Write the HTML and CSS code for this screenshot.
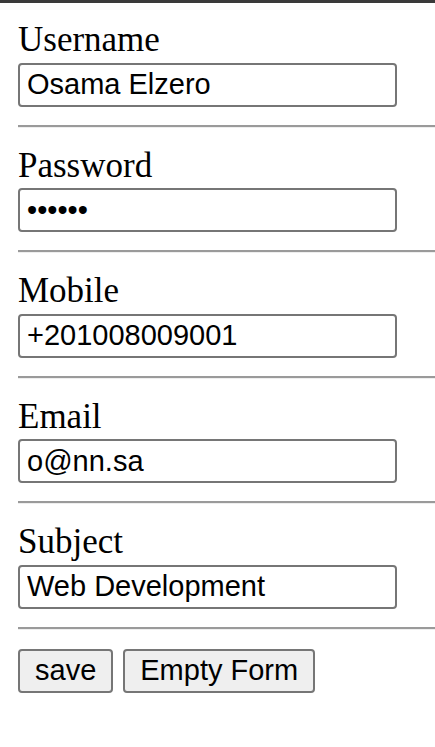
FILE: index.html
```html
<!DOCTYPE html>
<html>
<head>
<meta charset="utf-8">
<title>Form</title>
<link rel="stylesheet" href="styles.css">
</head>
<body>
<form class="form">
  <div class="field">
    <label class="label" for="u">Username</label>
    <input class="input" id="u" type="text" value="Osama Elzero">
  </div>
  <hr class="rule">
  <div class="field">
    <label class="label" for="p">Password</label>
    <input class="input" id="p" type="password" value="123456">
  </div>
  <hr class="rule">
  <div class="field">
    <label class="label" for="m">Mobile</label>
    <input class="input" id="m" type="text" value="+201008009001">
  </div>
  <hr class="rule">
  <div class="field">
    <label class="label" for="e">Email</label>
    <input class="input" id="e" type="text" value="o@nn.sa">
  </div>
  <hr class="rule">
  <div class="field">
    <label class="label" for="s">Subject</label>
    <input class="input" id="s" type="text" value="Web Development">
  </div>
  <hr class="rule">
  <div class="actions">
    <button class="btn" type="button">save</button>
    <button class="btn" type="reset">Empty Form</button>
  </div>
</form>
</body>
</html>
```

FILE: styles.css
```css
html {
  border-top: 3px solid #3a3a3a;
  background: #ffffff;
}
body {
  margin: 0;
  padding: 17px 0 0 18px;
  font-family: "Liberation Serif", "Times New Roman", serif;
  color: #000;
}
.form {
  margin: 0;
}
.field {
  display: flex;
  flex-direction: column;
  align-items: flex-start;
}
.label {
  font-size: 35px;
  line-height: 40.5px;
  height: 40.5px;
}
.input {
  box-sizing: border-box;
  width: 379px;
  height: 44px;
  margin: 2px 0 0 0;
  padding: 0 7px;
  border: 2px solid #767676;
  border-radius: 4px;
  font-family: "Liberation Sans", Arial, sans-serif;
  font-size: 29px;
  color: #000;
  background: #fff;
  outline: none;
}
.rule {
  margin: 18px 0;
  height: 0;
  border: 0;
  border-top: 2px solid #9a9a9a;
  border-bottom: 1px solid #eeeeee;
}
.actions {
  display: flex;
  gap: 10px;
  padding-top: 1px;
}
.btn {
  box-sizing: border-box;
  height: 44px;
  padding: 0 15px;
  border: 2px solid #767676;
  border-radius: 4px;
  background: #efefef;
  font-family: "Liberation Sans", Arial, sans-serif;
  font-size: 29px;
  color: #000;
}
```
